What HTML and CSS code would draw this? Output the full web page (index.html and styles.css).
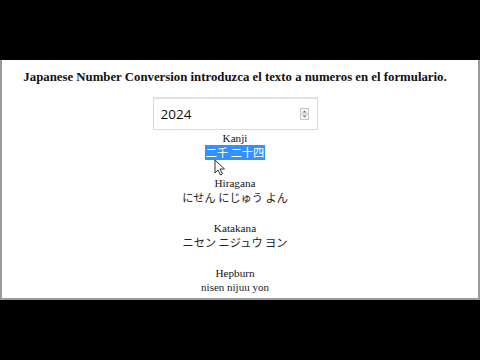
FILE: index.html
```html
<!DOCTYPE html>
<html>
<head>
<meta charset="utf-8">
<link rel="stylesheet" href="styles.css">
</head>
<body>
<div class="bar-top"></div>
<main class="panel">
  <div class="content">
    <h1 class="title">Japanese Number Conversion introduzca el texto a numeros en el formulario.</h1>
    <div class="field">
      <span class="field-value">2024</span>
      <svg class="spin" width="9" height="12" viewBox="0 0 9 12">
        <rect x="0.5" y="0.5" width="8" height="11" fill="#f4f4f4" stroke="#c8c8c8"/>
        <line x1="0.5" y1="6" x2="8.5" y2="6" stroke="#c8c8c8"/>
        <path d="M2.5 4.5 L4.5 2.5 L6.5 4.5 Z" fill="#777"/>
        <path d="M2.5 7.5 L4.5 9.5 L6.5 7.5 Z" fill="#777"/>
      </svg>
    </div>
    <section class="item">
      <div class="label">Kanji</div>
      <div class="value"><span class="selected">二千 二十四</span></div>
      <svg class="cursor" width="12" height="17" viewBox="0 0 12 17">
        <path d="M1 1 L1 14 L4 11 L6.5 16 L8.5 15 L6 10 L10.5 10 Z" fill="#fff" stroke="#333" stroke-width="1" stroke-linejoin="round"/>
      </svg>
    </section>
    <section class="item">
      <div class="label">Hiragana</div>
      <div class="value">にせん にじゅう よん</div>
    </section>
    <section class="item">
      <div class="label">Katakana</div>
      <div class="value">ニセン ニジュウ ヨン</div>
    </section>
    <section class="item">
      <div class="label">Hepburn</div>
      <div class="value roman">nisen nijuu yon</div>
    </section>
  </div>
</main>
<div class="bar-bottom"></div>
</body>
</html>
```
FILE: styles.css
```css
html, body {
  margin: 0;
  padding: 0;
  background: #000;
}
body {
  width: 480px;
  height: 360px;
  overflow: hidden;
}
.bar-top {
  height: 60px;
  background: #000;
}
.panel {
  height: 238px;
  background: #fff;
  border-left: 2px solid #9a9a9a;
  border-right: 2px solid #9a9a9a;
  border-bottom: 2px solid #9a9a9a;
  overflow: hidden;
}
.content {
  display: flex;
  flex-direction: column;
  align-items: center;
  padding: 9px 10px 0 0;
  font-family: "Liberation Serif", serif;
  color: #111;
}
.title {
  margin: 0;
  font-size: 12.8px;
  line-height: 16px;
  font-weight: bold;
  white-space: nowrap;
}
.field {
  margin-top: 12px;
  width: 148px;
  height: 30px;
  padding: 0 8px 0 7px;
  border: 1px solid #dcdcdc;
  border-top: 2px solid #e2e2e2;
  display: flex;
  align-items: center;
  justify-content: space-between;
}
.field-value {
  font-family: "Open Sans", "Noto Sans", sans-serif;
  font-size: 13.5px;
  color: #111;
}
.spin {
  display: block;
}
.item {
  position: relative;
  display: flex;
  flex-direction: column;
  align-items: center;
  margin-bottom: 16px;
}
.item:first-of-type {
  margin-top: 1px;
}
.label {
  font-size: 11.2px;
  line-height: 14px;
}
.value {
  font-family: "Noto Sans CJK JP", sans-serif;
  font-size: 11.2px;
  line-height: 15px;
  color: #222;
}
.value.roman {
  font-family: "Liberation Serif", serif;
  font-size: 11px;
}
.selected {
  display: inline-block;
  background: #3390ff;
  color: #fff;
  padding: 0 1px;
}
.cursor {
  position: absolute;
  left: 9px;
  top: 28px;
}
.bar-bottom {
  height: 60px;
  background: #000;
}
```
